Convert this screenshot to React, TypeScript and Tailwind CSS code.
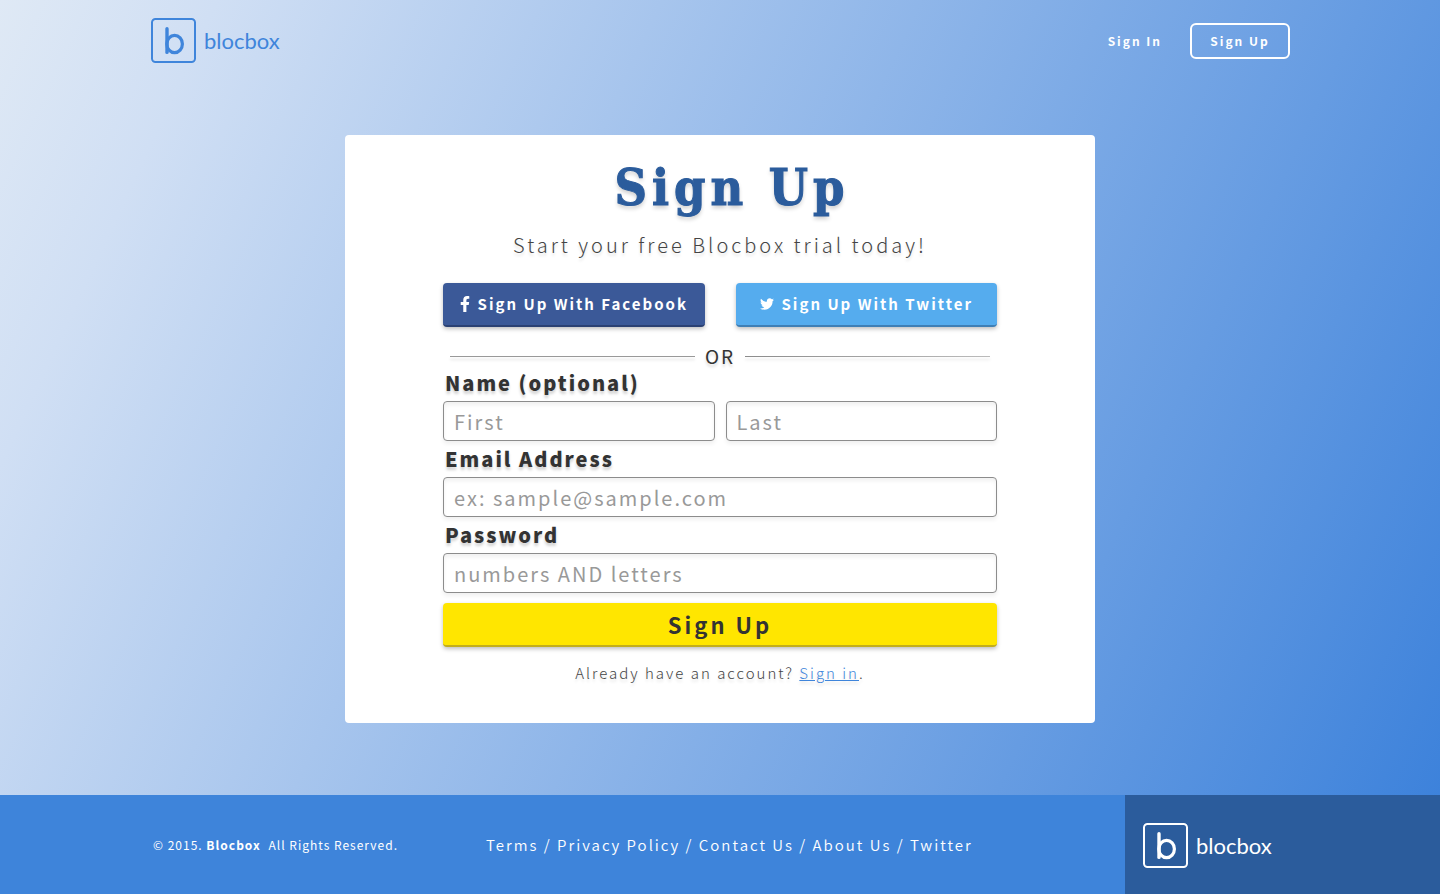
import React from "react";
import { FaFacebookF, FaTwitter } from "react-icons/fa";

const sans = "font-['Noto_Sans_CJK_SC','Noto_Sans',sans-serif]";

function Logo({ className }: { className: string }) {
  return (
    <a href="#home" aria-label="blocbox home" className={`flex items-center gap-2 ${className}`}>
      <svg viewBox="0 0 46 46" className="size-[46px]" fill="none" stroke="currentColor" aria-hidden="true">
        <rect x="2" y="1" width="43" height="43" rx="3.5" strokeWidth="2" />
        <line x1="17" y1="10.7" x2="17" y2="34.4" strokeWidth="3.4" strokeLinecap="round" />
        <ellipse cx="24.6" cy="26" rx="7.8" ry="8.6" strokeWidth="3.2" />
      </svg>
      <span className="font-['Lato',sans-serif] text-[22px] leading-7">blocbox</span>
    </a>
  );
}

const fieldClass =
  "h-10 w-full min-w-0 rounded border border-[#8c8c8c] bg-white px-[10px] text-xl tracking-[2px] text-[#333] shadow-[0_3px_4px_rgba(0,0,0,0.06),inset_0_3px_4px_rgba(0,0,0,0.06)] placeholder:text-[#999] placeholder:opacity-100";
const labelClass =
  "pl-[2px] text-xl font-black leading-9 tracking-[2px] text-[#333] [text-shadow:0_3px_3px_rgba(0,0,0,0.18)]";

const socialClass =
  "flex h-11 flex-1 items-center justify-center gap-2 rounded border-b-2 text-[15px] font-bold leading-5 tracking-[2px] text-white shadow-[0_2px_4px_rgba(0,0,0,0.25)]";

const footerLinks = ["Terms", "Privacy Policy", "Contact Us", "About Us", "Twitter"];

export default function App() {
  return (
    <div className={`flex min-h-screen flex-col ${sans}`}>
      <div className="flex flex-1 flex-col bg-[linear-gradient(115deg,#dfe9f5_0%,#d0dff4_12%,#3d82db_100%)]">
        <header className="mx-auto flex w-full max-w-[1140px] items-center justify-between pt-[18px]">
          <Logo className="text-[#3f85db]" />
          <nav className="flex items-center gap-7 text-xs font-bold leading-5 tracking-[2px] text-white">
            <a href="#signin">Sign In</a>
            <a href="#signup" className="flex h-9 w-[100px] items-center justify-center rounded-md border-2 border-white">
              Sign Up
            </a>
          </nav>
        </header>

        <main className="flex flex-1 flex-col items-center pt-[71px] pb-[72px]">
          <section className="w-full max-w-[750px] rounded bg-white px-[98px] pt-6 pb-9">
            <h1 className="pl-6 text-center font-['DejaVu_Serif_Condensed','DejaVu_Serif',serif] text-[50px] font-bold leading-[58px] tracking-[5px] text-[#2b5c9c] [-webkit-text-stroke:1px_#2b5c9c] [text-shadow:0_3px_4px_rgba(0,0,0,0.2)]">
              Sign Up
            </h1>
            <p className="mt-[14px] text-center text-[20px] font-light leading-7 tracking-[3px] text-[#444] [text-shadow:0_3px_3px_rgba(0,0,0,0.12)]">
              Start your free Blocbox trial today!
            </p>

            <div className="mt-6 flex gap-[31px]">
              <button type="button" className={`${socialClass} border-[#2b4173] bg-[#3b5998]`}>
                <FaFacebookF className="h-4 w-[10px]" aria-hidden="true" />
                Sign Up With Facebook
              </button>
              <button type="button" className={`${socialClass} border-[#3f7fb5] bg-[#55acee]`}>
                <FaTwitter className="size-[14px]" aria-hidden="true" />
                Sign Up With Twitter
              </button>
            </div>

            <div className="mt-5 flex h-[18px] items-center gap-[10px] px-[7px] text-[19px] leading-[18px] tracking-[2px] text-[#333]">
              <span className="h-px flex-1 bg-[#999] shadow-[0_3px_3px_rgba(0,0,0,0.15)]" />
              <span className="[text-shadow:0_3px_3px_rgba(0,0,0,0.15)]">OR</span>
              <span className="h-px flex-1 bg-[linear-gradient(90deg,#8c8c8c,#bbb)] shadow-[0_3px_3px_rgba(0,0,0,0.12)]" />
            </div>

            <form className="flex flex-col" onSubmit={(event) => event.preventDefault()}>
              <label htmlFor="first" className={labelClass}>
                Name (optional)
              </label>
              <div className="flex gap-[11px]">
                <input id="first" type="text" placeholder="First" className={fieldClass} />
                <input id="last" type="text" aria-label="Last name" placeholder="Last" className={fieldClass} />
              </div>
              <label htmlFor="email" className={labelClass}>
                Email Address
              </label>
              <input id="email" type="email" placeholder="ex: sample@sample.com" className={fieldClass} />
              <label htmlFor="password" className={labelClass}>
                Password
              </label>
              <input id="password" type="password" placeholder="numbers AND letters" className={fieldClass} />
              <button
                type="submit"
                className="mt-[10px] h-11 rounded border-b-2 border-[#c2ae1c] bg-[#ffe600] text-[22px] font-bold leading-7 tracking-[3px] text-[#333] shadow-[0_2px_4px_rgba(0,0,0,0.25)]"
              >
                Sign Up
              </button>
            </form>

            <p className="mt-3 text-center text-[15px] font-light leading-7 tracking-[2px] text-[#444] [text-shadow:0_3px_3px_rgba(0,0,0,0.12)]">
              Already have an account?{" "}
              <a href="#signin" className="text-[#3f85db] underline">
                Sign in
              </a>
              .
            </p>
          </section>
        </main>
      </div>

      <footer className="flex h-[99px] items-stretch bg-[#3e84da] text-white">
        <div className="flex flex-1 items-center gap-[88px] pl-[153px]">
          <p className="pt-px text-xs leading-5 tracking-[1px] whitespace-nowrap">
            © 2015. <strong className="mr-1">Blocbox</strong> All Rights Reserved.
          </p>
          <nav className="text-[15px] font-[350] leading-5 tracking-[2px] whitespace-nowrap">
            {footerLinks.map((link, i) => (
              <React.Fragment key={link}>
                {i > 0 && " / "}
                <a href={`#${link}`}>{link}</a>
              </React.Fragment>
            ))}
          </nav>
        </div>
        <div className="flex w-[315px] items-center bg-[#2b5c9c] pt-[2px] pl-[17px]">
          <Logo className="text-white" />
        </div>
      </footer>
    </div>
  );
}
